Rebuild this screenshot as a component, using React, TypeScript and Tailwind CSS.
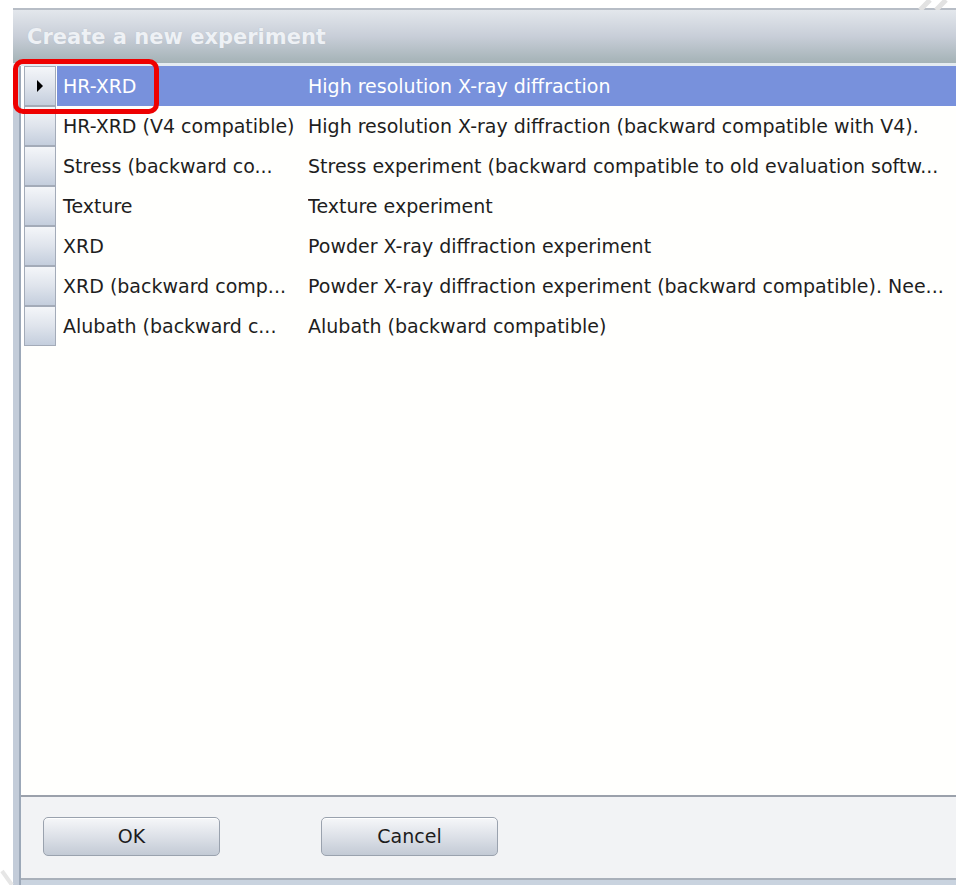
import { ReactNode } from 'react';

type Experiment = { name: string; description: string };

const experiments: Experiment[] = [
  { name: 'HR-XRD', description: 'High resolution X-ray diffraction' },
  { name: 'HR-XRD (V4 compatible)', description: 'High resolution X-ray diffraction (backward compatible with V4).' },
  { name: 'Stress (backward co...', description: 'Stress experiment (backward compatible to old evaluation softw...' },
  { name: 'Texture', description: 'Texture experiment' },
  { name: 'XRD', description: 'Powder X-ray diffraction experiment' },
  { name: 'XRD (backward comp...', description: 'Powder X-ray diffraction experiment (backward compatible). Nee...' },
  { name: 'Alubath (backward c...', description: 'Alubath (backward compatible)' },
];

const font = { fontFamily: '"DejaVu Sans", "Liberation Sans", sans-serif' };

// little grey selector box on the left of each row
const RowHeader = ({ current }: { current: boolean }) => (
  <div className="w-[36px] h-full pl-[3px] pr-[1px] bg-white">
    <div className="h-full border border-[#a3abb8] bg-gradient-to-b from-[#f4f6f9] via-[#dfe4ec] to-[#c4cedd] flex items-center justify-center">
      {current && (
        <svg width="8" height="12" viewBox="0 0 8 12">
          <path d="M1 0 L7 6 L1 12 Z" fill="#000" />
        </svg>
      )}
    </div>
  </div>
);

const DialogButton = ({ children }: { children: ReactNode }) => (
  <button className="w-[177px] h-[39px] rounded-[5px] border border-[#9aa2ae] bg-gradient-to-b from-[#f6f7f9] via-[#dde1e8] to-[#c3cad5] text-[19px] text-[#1c1c1c] shadow-[inset_0_1px_0_#ffffff]">
    {children}
  </button>
);

export default function App() {
  const selected = 0;

  return (
    <div className="relative min-h-screen bg-white overflow-hidden" style={font}>
      <div className="pt-2 pl-[13px] h-[885px]">
        <div className="w-[960px] h-full flex flex-col">
          {/* title bar */}
          <div className="h-[55px] border-t-2 border-[#b7bdc6] bg-gradient-to-b from-[#e3e7ec] via-[#c8ced8] to-[#a4b2b6] flex items-center pl-[14px] pt-[3px]">
            <span className="text-[21px] font-bold text-[#eef1f5]" style={{ textShadow: '0 0 1px #b0b8c2' }}>
              Create a new experiment
            </span>
          </div>
          <div className="h-[3px] bg-[#e4ebf0]" />

          <div className="flex-1 flex">
            {/* left frame strip */}
            <div className="w-[8px] bg-[#c3ccd9] border-r-2 border-[#9ca8b8]" />

            <div className="flex-1 flex flex-col">
              {/* experiment list */}
              <div className="flex-1 bg-[#fffffd]">
                {experiments.map((exp, i) => {
                  const active = i === selected;
                  return (
                    <div key={exp.name} className="h-[40px] flex items-stretch text-[19px]">
                      <RowHeader current={active} />
                      <div className={`flex-1 flex items-center ${active ? 'bg-[#7891dc] text-white' : 'text-[#1e1e1e]'}`}>
                        <div className="w-[251px] pl-[6px] whitespace-nowrap overflow-hidden">{exp.name}</div>
                        <div className="flex-1 whitespace-nowrap overflow-hidden">{exp.description}</div>
                      </div>
                    </div>
                  );
                })}
              </div>

              {/* footer with buttons */}
              <div className="h-[83px] border-t-2 border-[#9ba1ab] bg-[#f2f3f5] flex items-center gap-[101px] pl-[22px] pb-[2px]">
                <DialogButton>OK</DialogButton>
                <DialogButton>Cancel</DialogButton>
              </div>
              <div className="h-[2px] bg-[#a9b0ba]" />
              <div className="h-[5px] bg-[#c9d3df]" />
            </div>
          </div>
        </div>
      </div>

      {/* red callout around the selected row */}
      <div className="absolute left-[13px] top-[59px] w-[146px] h-[55px] border-[5px] border-[#ee0000] rounded-[10px]" />

      {/* faint corner marks */}
      <svg className="absolute right-[4px] top-0" width="36" height="10" viewBox="0 0 36 10">
        <path d="M4 10 L14 0 M20 10 L30 0" stroke="#e2e2e2" strokeWidth="5" />
      </svg>
      <svg className="absolute left-0 bottom-0" width="20" height="16" viewBox="0 0 20 16">
        <path d="M2 2 L12 16" stroke="#e6e6e6" strokeWidth="4" />
      </svg>
    </div>
  );
}
